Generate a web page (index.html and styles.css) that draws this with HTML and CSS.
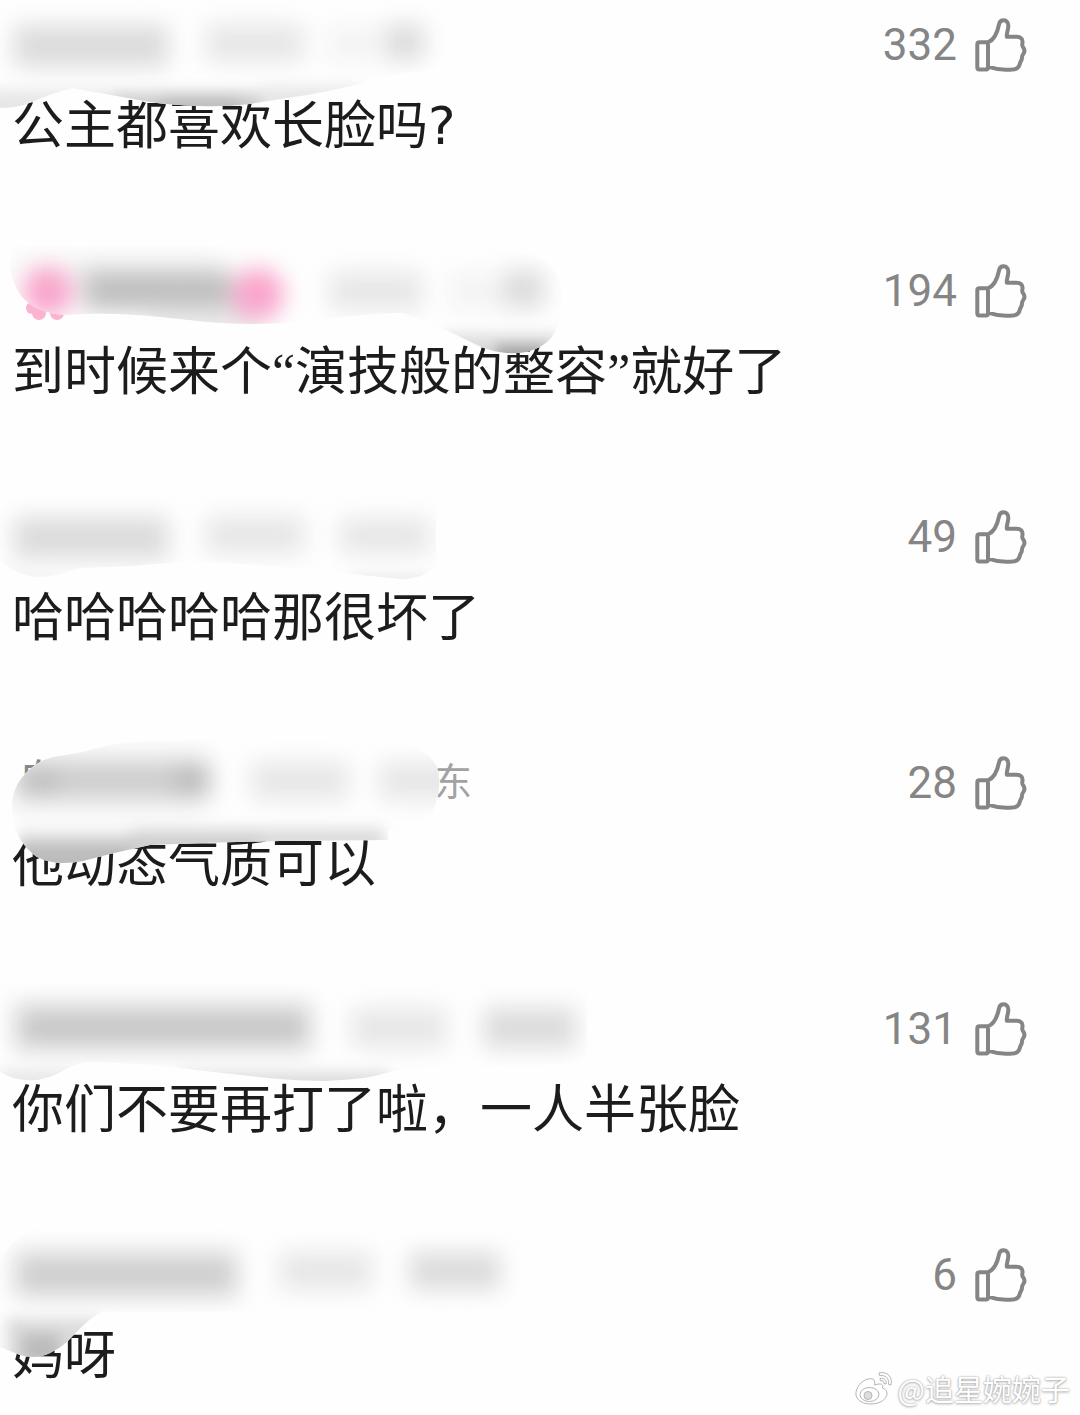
FILE: index.html
```html
<!DOCTYPE html>
<html lang="zh-CN">
<head>
<meta charset="utf-8">
<meta name="viewport" content="width=device-width, initial-scale=1">
<title>评论</title>
<link rel="stylesheet" href="styles.css">
</head>
<body>
<svg class="defs" aria-hidden="true">
  <symbol id="thumb" viewBox="0 0 56 56">
    <path d="M6.500 25.300H15V50.500Q15 52.500 13 52.500H6.500Q4.300 52.500 4.300 50V27.500Q4.300 25.300 6.500 25.300ZM15 25.300C21 23 24.500 15 26 7.500C26.500 4.500 28 3.200 30.500 3.200C34 3.200 35.700 6.500 35.200 10C35 13.500 33.600 15.500 33.800 19.700H43.500C48 19.700 49.800 22 49.500 25.500C49.300 27.500 48.800 28.500 49.800 29.800C51.600 32 52.200 34 50.600 36.500C49.300 38.200 48.800 38.800 48.900 41C49 43.500 47.500 44 46.900 46.500C46.200 49.500 45 51.600 41.500 52.200C34 53.200 23 52.500 15 49.700"/>
  </symbol>
</svg>

<main class="comments">
  <article class="comment">
    <header class="head">
      <button class="like" type="button" aria-label="点赞"><span>332</span><svg class="icon"><use href="#thumb"/></svg></button>
    </header>
    <p class="body">公主都喜欢长脸吗?</p>
    <svg class="smudge" viewBox="0 0 600 140" aria-hidden="true">
      <clipPath id="c1"><path d="M0 0H445V62Q436 66 428 70Q414 73 400 73L355 85Q320 93 300 96L250 104Q225 107 200 106Q170 105 150 102L72 88Q50 94 32 102Q18 108 0 108Z"/></clipPath>
      <g clip-path="url(#c1)">
        <rect class="paper" width="600" height="140"/>
        <g class="soft">
          <rect class="g3" x="14" y="25" width="154" height="42"/>
          <rect class="g2" x="206" y="24" width="98" height="38"/>
          <rect class="g1" x="328" y="26" width="54" height="36"/>
          <rect class="g3" x="386" y="24" width="38" height="36"/>
        </g>
        <g class="edge">
          <rect class="g2" x="-10" y="90" width="130" height="30"/>
          <rect class="g4" x="115" y="92" width="145" height="30"/>
          <rect class="g5" x="160" y="98" width="80" height="20"/>
          <rect class="g2" x="260" y="86" width="100" height="30"/>
        </g>
      </g>
    </svg>
  </article>

  <article class="comment">
    <header class="head">
      <button class="like" type="button" aria-label="点赞"><span>194</span><svg class="icon"><use href="#thumb"/></svg></button>
    </header>
    <p class="body">到时候来个<span class="quote">“</span>演技般的整容<span class="quote">”</span>就好了</p>
    <svg class="smudge" viewBox="0 0 600 140" aria-hidden="true">
      <g class="petal"><circle cx="32" cy="62" r="6"/><circle cx="39" cy="67" r="7"/><circle cx="57" cy="67" r="7"/></g>
      <clipPath id="c2"><path d="M10 0V22Q12 38 22 51Q30 60 41 64Q53 69 67 69Q92 67 118 68Q145 69 170 72L207 76Q230 78 252 78Q275 78 296 76L351 70Q378 67 403 67Q424 74 444 83L481 101Q494 106 507 107Q521 108 533 104Q549 98 555 86Q562 72 562 56Q562 38 555 26Q548 15 533 9L480 0Z"/></clipPath>
      <g clip-path="url(#c2)">
        <rect class="paper" width="600" height="140"/>
        <g class="soft">
          <rect class="g1" x="16" y="12" width="200" height="28"/>
          <rect class="g4" x="82" y="22" width="150" height="44"/>
          <rect class="g5" x="92" y="34" width="136" height="22"/>
          <rect class="g2" x="150" y="62" width="110" height="26"/>
          <rect class="g2" x="330" y="26" width="92" height="38"/>
          <rect class="g1" x="450" y="26" width="60" height="38"/>
          <rect class="g3" x="504" y="24" width="40" height="38"/>
          <circle class="pink" cx="48" cy="46" r="25"/>
          <circle class="pink" cx="258" cy="48" r="26"/>
        </g>
        <g class="edge"><rect class="g3" x="440" y="88" width="120" height="35"/><rect class="g6" x="496" y="100" width="50" height="20"/></g>
      </g>
    </svg>
  </article>

  <article class="comment">
    <header class="head">
      <button class="like" type="button" aria-label="点赞"><span>49</span><svg class="icon"><use href="#thumb"/></svg></button>
    </header>
    <p class="body">哈哈哈哈哈那很坏了</p>
    <svg class="smudge" viewBox="0 0 600 140" aria-hidden="true">
      <clipPath id="c3"><path d="M0 0V68Q8 76 20 81Q30 85 40 85Q50 85 60 82L82 76L133 74Q170 70 200 70Q235 71 267 74L333 80L400 87Q411 87 420 84Q430 80 436 72V0Z"/></clipPath>
      <g clip-path="url(#c3)">
        <rect class="paper" width="600" height="140"/>
        <g class="soft">
          <rect class="g3" x="14" y="25" width="154" height="42"/>
          <rect class="g2" x="206" y="24" width="98" height="38"/>
          <rect class="g2" x="340" y="26" width="90" height="36"/>
        </g>
        <g class="edge"><rect class="g1" x="0" y="76" width="60" height="20"/><rect class="g2" x="350" y="84" width="80" height="16"/></g>
      </g>
    </svg>
  </article>

  <article class="comment">
    <header class="head">
      <div class="meta"><span class="author">自</span><span class="place">东</span></div>
      <button class="like" type="button" aria-label="点赞"><span>28</span><svg class="icon"><use href="#thumb"/></svg></button>
    </header>
    <p class="body">他动态气质可以</p>
    <svg class="smudge" viewBox="0 0 600 140" aria-hidden="true">
      <clipPath id="c4"><path d="M12 69Q12 57 17 47Q22 38 30 31Q40 22 53 19L83 14Q108 6 133 4Q270 -2 400 3Q415 6 423 14Q433 20 437 29Q440 38 439 49Q438 62 433 72Q429 82 420 89L388 92V102L280 103L200 105L150 107L110 116L83 123Q73 125 63 125Q49 125 37 119Q28 113 20 101Q12 86 12 69Z"/></clipPath>
      <g clip-path="url(#c4)">
        <rect class="paper" width="600" height="140"/>
        <g class="soft">
          <rect class="g1" x="14" y="8" width="190" height="70"/>
          <rect class="g4" x="14" y="24" width="196" height="36"/>
          <rect class="g5" x="24" y="34" width="34" height="20"/>
          <rect class="g5" x="174" y="28" width="36" height="28"/>
          <rect class="g2" x="252" y="24" width="96" height="38"/>
          <rect class="g2" x="380" y="24" width="90" height="38"/>
        </g>
        <g class="edge">
          <rect class="g3" x="18" y="94" width="130" height="14"/>
          <rect class="g5" x="18" y="106" width="120" height="34"/>
          <rect class="g3" x="130" y="90" width="254" height="30"/>
          <rect class="g4" x="130" y="98" width="130" height="20"/>
        </g>
      </g>
    </svg>
  </article>

  <article class="comment">
    <header class="head">
      <button class="like" type="button" aria-label="点赞"><span>131</span><svg class="icon"><use href="#thumb"/></svg></button>
    </header>
    <p class="body">你们不要再打了啦，一人半张脸</p>
    <svg class="smudge" viewBox="0 0 600 140" aria-hidden="true">
      <clipPath id="c5"><path d="M0 0V88Q14 96 27 96Q35 97 42 95Q52 93 61 88Q69 83 77 80Q84 78 92 78Q123 79 153 81L214 88L268 94Q300 97 325 97Q345 96 364 94Q380 91 394 87L440 83L551 81L587 76V0Z"/></clipPath>
      <g clip-path="url(#c5)">
        <rect class="paper" width="600" height="140"/>
        <g class="soft">
          <rect class="g3" x="14" y="18" width="298" height="50"/>
          <rect class="g4" x="20" y="30" width="286" height="28"/>
          <rect class="g5" x="30" y="38" width="270" height="10"/>
          <rect class="g2" x="352" y="24" width="94" height="40"/>
          <rect class="g3" x="484" y="24" width="92" height="40"/>
        </g>
        <g class="edge"><rect class="g2" x="0" y="86" width="76" height="24"/><rect class="g3" x="180" y="88" width="210" height="26"/></g>
      </g>
    </svg>
  </article>

  <article class="comment">
    <header class="head">
      <button class="like" type="button" aria-label="点赞"><span>6</span><svg class="icon"><use href="#thumb"/></svg></button>
    </header>
    <p class="body">妈呀</p>
    <svg class="smudge" viewBox="0 0 600 140" aria-hidden="true">
      <clipPath id="c6"><path d="M0 30Q10 12 30 0H520V80L133 82Q115 81 103 82Q95 85 87 92Q77 101 67 112Q59 119 50 123Q42 127 33 127Q26 127 20 125L0 117Z"/></clipPath>
      <g clip-path="url(#c6)">
        <rect class="paper" width="600" height="140"/>
        <g class="soft">
          <rect class="g3" x="14" y="20" width="224" height="48"/>
          <rect class="g4" x="20" y="32" width="212" height="26"/>
          <rect class="g2" x="280" y="22" width="92" height="38"/>
          <rect class="g3" x="410" y="22" width="90" height="38"/>
        </g>
        <g class="edge"><rect class="g3" x="6" y="88" width="94" height="50"/><rect class="g5" x="22" y="104" width="38" height="30"/></g>
      </g>
    </svg>
  </article>

  <div class="watermark">
    <svg class="weibo" viewBox="0 0 40 36" aria-hidden="true">
      <path d="M14 9C8 10 1 18 2 25C3 31 10 34 17 34C26 34 33 29 33 23.500C33 20.500 31 19 28.500 18C29.500 15 28 12.500 20.500 15C21.500 11 20 7.500 14 9Z"/>
      <ellipse cx="15.500" cy="24.500" rx="9.500" ry="7"/>
      <circle class="pupil" cx="14" cy="25.500" r="4"/>
      <path d="M25 3C33 1 39 7 37 15L34.500 14.500C35.500 8.500 31.500 4.500 25.500 5.700ZM26 8.500C30 7.500 33 10.500 32 14L29.800 13.500C30.200 11.500 28.700 10.300 26.500 10.800Z"/>
    </svg>
    <span>@追星婉婉子</span>
  </div>
</main>
</body>
</html>
```

FILE: styles.css
```css
* {
  box-sizing: border-box;
}

body {
  margin: 0;
  background: #fefefe;
  color: #1c1c1c;
  font-family: "DejaVu Sans", "Noto Sans CJK SC", sans-serif;
}

.defs {
  display: none;
}

.comments {
  position: relative;
  display: flex;
  flex-direction: column;
  gap: 88px;
  min-height: 100vh;
}

.comment {
  position: relative;
}

.head {
  display: flex;
  align-items: center;
  height: 90px;
  padding: 0 51px 0 18px;
}

.meta {
  display: flex;
  flex: none;
  align-items: baseline;
  justify-content: space-between;
  width: 454px;
  padding-bottom: 10px;
  color: #888;
  font-family: "Noto Sans CJK SC", sans-serif;
  font-size: 38px;
  line-height: 48px;
}

.author {
  font-size: 42px;
}

.place {
  color: #a2a2a2;
}

.like {
  display: flex;
  align-items: center;
  gap: 16px;
  margin-left: auto;
  padding: 0;
  border: 0;
  background: none;
  color: #858585;
  font: 44px/56px Roboto, sans-serif;
}

.icon {
  width: 56px;
  height: 56px;
  fill: none;
  stroke: #858585;
  stroke-width: 4;
  stroke-linejoin: round;
}

.body {
  margin: 0;
  padding: 4px 12px 0;
  font-size: 52px;
  line-height: 64px;
}

.quote {
  font-family: "Liberation Serif", serif;
  line-height: 1;
}

/* Brush strokes that hide the names lie over both lines of a comment. */
.smudge {
  position: absolute;
  top: 0;
  left: 0;
  width: 600px;
  height: 140px;
  pointer-events: none;
}

.paper { fill: #fefefe; }
.soft { filter: blur(11px); }
.edge { filter: blur(7px); }
.g1 { fill: #f4f4f4; }
.g2 { fill: #e7e7e7; }
.g3 { fill: #dcdcdc; }
.g4 { fill: #cecece; }
.g5 { fill: #bcbcbc; }
.g6 { fill: #a0a0a0; }
.pink { fill: #f9a6cc; }
.petal { fill: #fbb3d2; }

.watermark {
  position: absolute;
  right: 10px;
  bottom: 7px;
  display: flex;
  align-items: center;
  gap: 4px;
  color: #fff;
  font-family: "Noto Sans CJK SC", sans-serif;
  font-size: 29px;
  line-height: 40px;
  text-shadow: 0 0 2px #999, 0 1px 3px #bbb;
}

.weibo {
  width: 40px;
  height: 36px;
  fill: #fff;
  stroke: #b4b4b4;
  stroke-width: 1;
}

.weibo .pupil {
  fill: #ddd;
}
```
